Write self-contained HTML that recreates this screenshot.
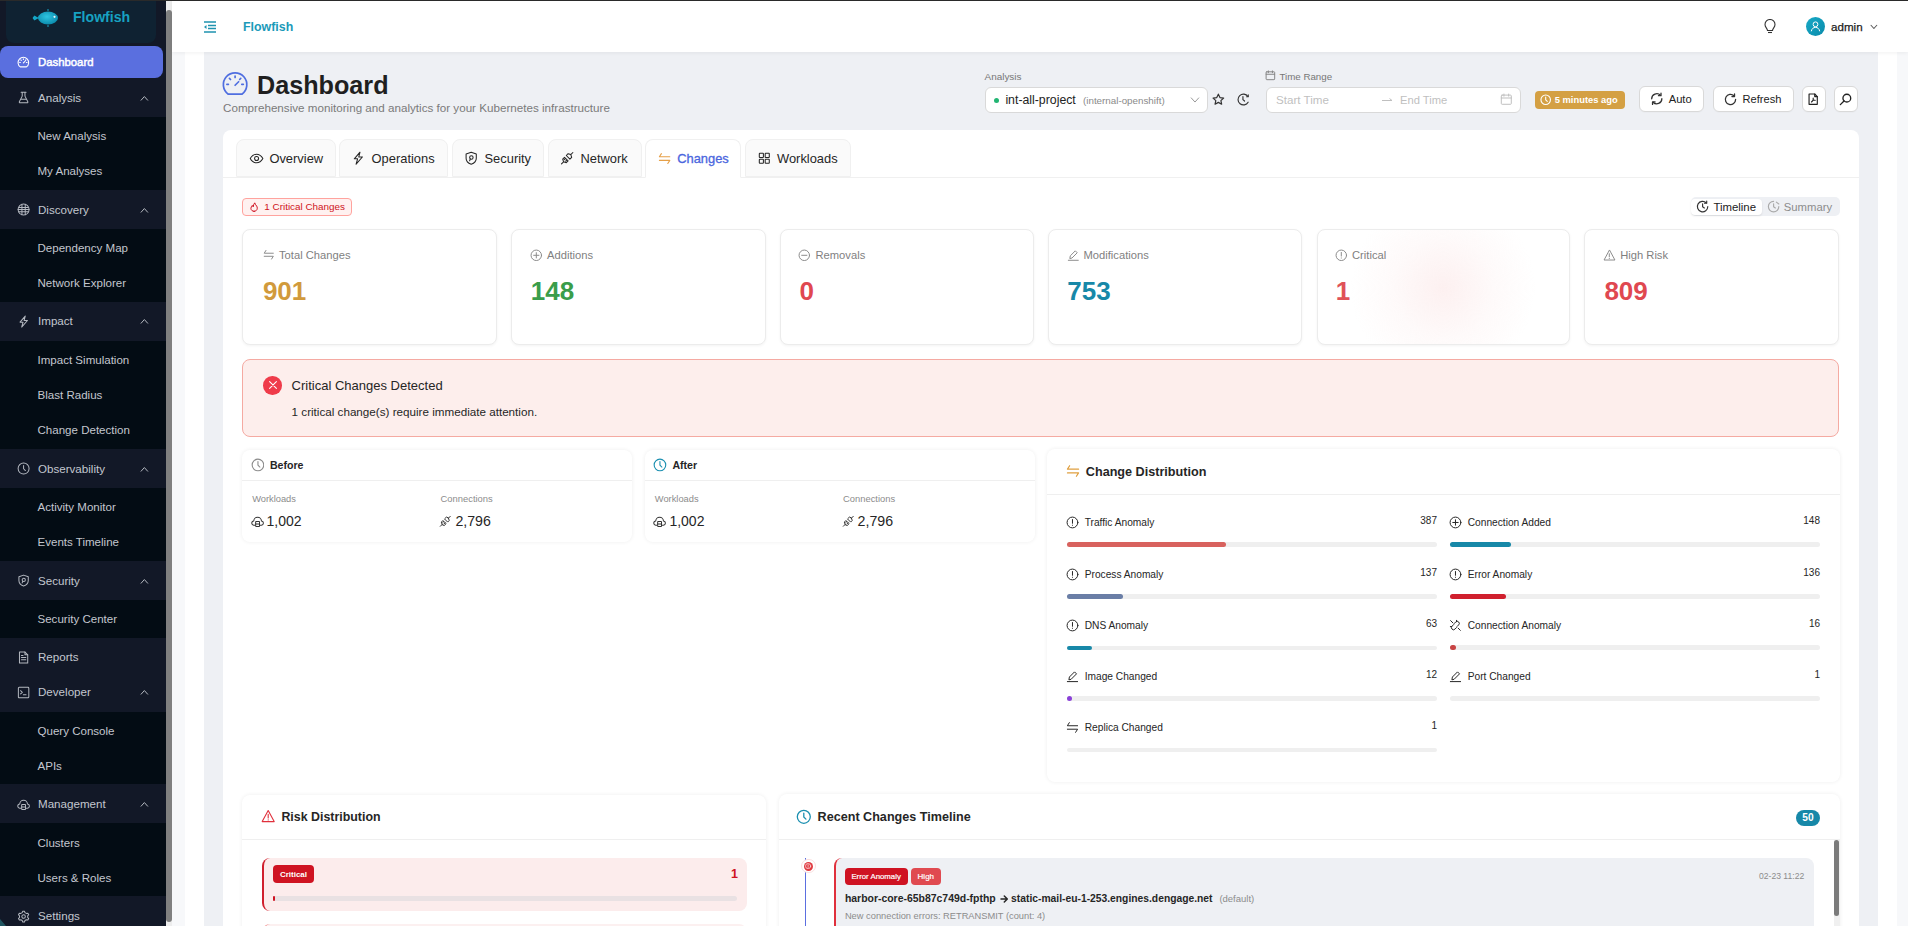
<!DOCTYPE html><html><head><meta charset="utf-8"><style>
*{margin:0;padding:0;box-sizing:border-box}
html,body{width:1908px;height:926px;overflow:hidden;background:#f7f8fa;font-family:"Liberation Sans",sans-serif}
.a{position:absolute}
.t{white-space:nowrap}
</style></head><body><div class="a" style="left:0;top:0;width:1908px;height:926px;overflow:hidden">
<div class="a" style="left:172px;top:0px;width:1736.00px;height:926.00px;background:#f7f8fa"></div>
<div class="a" style="left:185px;top:0px;width:1712.00px;height:926.00px;background:#ffffff"></div>
<div class="a" style="left:204px;top:52px;width:1674.00px;height:874.00px;background:#eef0f4"></div>
<div class="a" style="left:0px;top:0px;width:166.00px;height:926.00px;background:#121827"></div>
<div class="a" style="left:0px;top:117px;width:166.00px;height:73.00px;background:#030c14"></div>
<div class="a" style="left:0px;top:229px;width:166.00px;height:73.00px;background:#030c14"></div>
<div class="a" style="left:0px;top:341px;width:166.00px;height:108.00px;background:#030c14"></div>
<div class="a" style="left:0px;top:488px;width:166.00px;height:73.00px;background:#030c14"></div>
<div class="a" style="left:0px;top:600px;width:166.00px;height:38.00px;background:#030c14"></div>
<div class="a" style="left:0px;top:712px;width:166.00px;height:72.00px;background:#030c14"></div>
<div class="a" style="left:0px;top:823px;width:166.00px;height:73.00px;background:#030c14"></div>
<svg class="a" style="left:0;top:918px" width="8" height="8" viewBox="0 0 8 8"><path d="M0 1 L6 8 H0Z" fill="#1f5560"/></svg>
<div class="a" style="left:166px;top:0px;width:6.00px;height:926.00px;background:#ededed"></div>
<div class="a" style="left:166px;top:10px;width:6.00px;height:912.00px;background:#808080;border-radius:3px"></div>
<div class="a" style="left:6px;top:0px;width:150.00px;height:43.00px;background:#0f2232;border-radius:0 0 8px 8px"></div>
<svg class="a" style="left:31px;top:8px" width="30" height="20" viewBox="0 0 30 20"><defs><radialGradient id="fg" cx="45%" cy="40%" r="60%"><stop offset="0" stop-color="#2ec4e0"/><stop offset="1" stop-color="#0c8cad"/></radialGradient></defs><ellipse cx="17" cy="10" rx="10" ry="6.5" fill="url(#fg)"/><path d="M8 10 L3 7.5 L3 12.5 Z" fill="#14a6c6"/><circle cx="3.5" cy="10" r="1.8" fill="#14a6c6"/><path d="M17 3 v-2M17 17v2" stroke="#14a6c6" stroke-width="1"/><circle cx="23.5" cy="8.8" r="1.1" fill="#e8f6fa"/></svg>
<div class="a t" style="left:73px;top:7.00px;font-size:14.1px;line-height:20px;color:#17a2c2;font-weight:700;">Flowfish</div>
<div class="a" style="left:0px;top:46px;width:163.00px;height:32.00px;background:#5a6fdf;border-radius:8px"></div>
<svg class="a" style="left:17.04px;top:56.04px;" width="12.72" height="12.72" viewBox="0 0 24 24" fill="none" stroke="#ffffff" stroke-width="2.08" stroke-linecap="round" stroke-linejoin="round"><path d="M6.2 20.6 A10 10 0 1 1 17.8 20.6 Z"/><path d="M12 5.2v1.2M7.2 7.2l.9.9M16.8 7.2l-.9.9M5 12.2h1.3M17.7 12.2h1.3M12 13l3-3"/></svg>
<div class="a t" style="left:38px;top:54.00px;font-size:11.35px;line-height:16px;color:#ffffff;font-weight:400;-webkit-text-stroke:0.45px #fff">Dashboard</div>
<svg class="a" style="left:16.90px;top:90.90px;" width="13.20" height="13.20" viewBox="0 0 24 24" fill="none" stroke="#b4b8c0" stroke-width="1.82" stroke-linecap="round" stroke-linejoin="round"><path d="M7.5 2.5h9M9.5 2.5v6.8L4.3 19.6a1.3 1.3 0 0 0 1.1 1.9h13.2a1.3 1.3 0 0 0 1.1-1.9L14.5 9.3V2.5M6.8 15h10.4"/></svg>
<div class="a t" style="left:38px;top:90.00px;font-size:11.6px;line-height:16px;color:#c3c7cf;font-weight:400;">Analysis</div>
<svg class="a" style="left:140.32px;top:94.12px;" width="8.76" height="8.76" viewBox="0 0 24 24" fill="none" stroke="#b4b8c0" stroke-width="2.74" stroke-linecap="round" stroke-linejoin="round"><path d="M3 17 12 7l9 10"/></svg>
<svg class="a" style="left:16.90px;top:202.90px;" width="13.20" height="13.20" viewBox="0 0 24 24" fill="none" stroke="#b4b8c0" stroke-width="1.82" stroke-linecap="round" stroke-linejoin="round"><circle cx="12" cy="12" r="10"/><path d="M2 12h20M9 2.5v19M15 2.5v19M3.5 8h17M3.5 16h17"/></svg>
<div class="a t" style="left:38px;top:202.00px;font-size:11.6px;line-height:16px;color:#c3c7cf;font-weight:400;">Discovery</div>
<svg class="a" style="left:140.32px;top:206.12px;" width="8.76" height="8.76" viewBox="0 0 24 24" fill="none" stroke="#b4b8c0" stroke-width="2.74" stroke-linecap="round" stroke-linejoin="round"><path d="M3 17 12 7l9 10"/></svg>
<svg class="a" style="left:16.90px;top:314.90px;" width="13.20" height="13.20" viewBox="0 0 24 24" fill="none" stroke="#b4b8c0" stroke-width="1.82" stroke-linecap="round" stroke-linejoin="round"><path d="M15 2 5.5 13h5.5L8.5 22 19 10h-6z"/></svg>
<div class="a t" style="left:38px;top:313.00px;font-size:11.6px;line-height:16px;color:#c3c7cf;font-weight:400;">Impact</div>
<svg class="a" style="left:140.32px;top:317.12px;" width="8.76" height="8.76" viewBox="0 0 24 24" fill="none" stroke="#b4b8c0" stroke-width="2.74" stroke-linecap="round" stroke-linejoin="round"><path d="M3 17 12 7l9 10"/></svg>
<svg class="a" style="left:16.90px;top:461.90px;" width="13.20" height="13.20" viewBox="0 0 24 24" fill="none" stroke="#b4b8c0" stroke-width="1.82" stroke-linecap="round" stroke-linejoin="round"><circle cx="12" cy="12" r="10"/><path d="M12 6.2V12.3l3.3 3.3"/></svg>
<div class="a t" style="left:38px;top:461.00px;font-size:11.6px;line-height:16px;color:#c3c7cf;font-weight:400;">Observability</div>
<svg class="a" style="left:140.32px;top:465.12px;" width="8.76" height="8.76" viewBox="0 0 24 24" fill="none" stroke="#b4b8c0" stroke-width="2.74" stroke-linecap="round" stroke-linejoin="round"><path d="M3 17 12 7l9 10"/></svg>
<svg class="a" style="left:16.90px;top:573.90px;" width="13.20" height="13.20" viewBox="0 0 24 24" fill="none" stroke="#b4b8c0" stroke-width="1.82" stroke-linecap="round" stroke-linejoin="round"><path d="M12 2 3.5 5v7c0 5 3.6 8.4 8.5 10 4.9-1.6 8.5-5 8.5-10V5z"/><circle cx="12.3" cy="10.8" r="2.9"/><path d="M10.6 13.2 9.4 16.2"/></svg>
<div class="a t" style="left:38px;top:573.00px;font-size:11.6px;line-height:16px;color:#c3c7cf;font-weight:400;">Security</div>
<svg class="a" style="left:140.32px;top:577.12px;" width="8.76" height="8.76" viewBox="0 0 24 24" fill="none" stroke="#b4b8c0" stroke-width="2.74" stroke-linecap="round" stroke-linejoin="round"><path d="M3 17 12 7l9 10"/></svg>
<svg class="a" style="left:16.90px;top:650.80px;" width="13.20" height="13.20" viewBox="0 0 24 24" fill="none" stroke="#b4b8c0" stroke-width="1.82" stroke-linecap="round" stroke-linejoin="round"><path d="M4.5 2h10L19.5 7v15h-15z"/><path d="M14.5 2v5h5M8 12h8M8 16h8M8 8h3"/></svg>
<div class="a t" style="left:38px;top:649.00px;font-size:11.6px;line-height:16px;color:#c3c7cf;font-weight:400;">Reports</div>
<svg class="a" style="left:16.90px;top:685.70px;" width="13.20" height="13.20" viewBox="0 0 24 24" fill="none" stroke="#b4b8c0" stroke-width="1.82" stroke-linecap="round" stroke-linejoin="round"><rect x="2.5" y="2.5" width="19" height="19" rx="1.5"/><path d="M6.5 8.5l3.2 3-3.2 3M11.5 16h5"/></svg>
<div class="a t" style="left:38px;top:684.00px;font-size:11.6px;line-height:16px;color:#c3c7cf;font-weight:400;">Developer</div>
<svg class="a" style="left:140.32px;top:688.12px;" width="8.76" height="8.76" viewBox="0 0 24 24" fill="none" stroke="#b4b8c0" stroke-width="2.74" stroke-linecap="round" stroke-linejoin="round"><path d="M3 17 12 7l9 10"/></svg>
<svg class="a" style="left:16.90px;top:797.90px;" width="13.20" height="13.20" viewBox="0 0 24 24" fill="none" stroke="#b4b8c0" stroke-width="1.82" stroke-linecap="round" stroke-linejoin="round"><path d="M7 18.5H5.5a3.8 3.8 0 0 1-.5-7.6 7 7 0 0 1 14 0 3.8 3.8 0 0 1-.5 7.6H17"/><rect x="8.5" y="12" width="7" height="9" rx=".8"/><path d="M8.5 16.5h7"/></svg>
<div class="a t" style="left:38px;top:796.00px;font-size:11.6px;line-height:16px;color:#c3c7cf;font-weight:400;">Management</div>
<svg class="a" style="left:140.32px;top:800.12px;" width="8.76" height="8.76" viewBox="0 0 24 24" fill="none" stroke="#b4b8c0" stroke-width="2.74" stroke-linecap="round" stroke-linejoin="round"><path d="M3 17 12 7l9 10"/></svg>
<svg class="a" style="left:16.90px;top:909.90px;" width="13.20" height="13.20" viewBox="0 0 24 24" fill="none" stroke="#b4b8c0" stroke-width="1.82" stroke-linecap="round" stroke-linejoin="round"><circle cx="12" cy="12" r="3.2"/><path d="M9.53 4.81 L10.44 2.12 L13.56 2.12 L14.47 4.81 L16.99 6.26 L19.77 5.71 L21.34 8.42 L19.46 10.55 L19.46 13.45 L21.34 15.58 L19.77 18.29 L16.99 17.74 L14.47 19.19 L13.56 21.88 L10.44 21.88 L9.53 19.19 L7.01 17.74 L4.23 18.29 L2.66 15.58 L4.54 13.45 L4.54 10.55 L2.66 8.42 L4.23 5.71 L7.01 6.26Z"/></svg>
<div class="a t" style="left:38px;top:908.00px;font-size:11.6px;line-height:16px;color:#c3c7cf;font-weight:400;">Settings</div>
<div class="a t" style="left:37.5px;top:128.00px;font-size:11.55px;line-height:16px;color:#c3c7cf;font-weight:400;">New Analysis</div>
<div class="a t" style="left:37.5px;top:163.00px;font-size:11.55px;line-height:16px;color:#c3c7cf;font-weight:400;">My Analyses</div>
<div class="a t" style="left:37.5px;top:240.00px;font-size:11.55px;line-height:16px;color:#c3c7cf;font-weight:400;">Dependency Map</div>
<div class="a t" style="left:37.5px;top:275.00px;font-size:11.55px;line-height:16px;color:#c3c7cf;font-weight:400;">Network Explorer</div>
<div class="a t" style="left:37.5px;top:352.00px;font-size:11.55px;line-height:16px;color:#c3c7cf;font-weight:400;">Impact Simulation</div>
<div class="a t" style="left:37.5px;top:387.00px;font-size:11.55px;line-height:16px;color:#c3c7cf;font-weight:400;">Blast Radius</div>
<div class="a t" style="left:37.5px;top:422.00px;font-size:11.55px;line-height:16px;color:#c3c7cf;font-weight:400;">Change Detection</div>
<div class="a t" style="left:37.5px;top:499.00px;font-size:11.55px;line-height:16px;color:#c3c7cf;font-weight:400;">Activity Monitor</div>
<div class="a t" style="left:37.5px;top:534.00px;font-size:11.55px;line-height:16px;color:#c3c7cf;font-weight:400;">Events Timeline</div>
<div class="a t" style="left:37.5px;top:611.00px;font-size:11.55px;line-height:16px;color:#c3c7cf;font-weight:400;">Security Center</div>
<div class="a t" style="left:37.5px;top:723.00px;font-size:11.55px;line-height:16px;color:#c3c7cf;font-weight:400;">Query Console</div>
<div class="a t" style="left:37.5px;top:758.00px;font-size:11.55px;line-height:16px;color:#c3c7cf;font-weight:400;">APIs</div>
<div class="a t" style="left:37.5px;top:835.00px;font-size:11.55px;line-height:16px;color:#c3c7cf;font-weight:400;">Clusters</div>
<div class="a t" style="left:37.5px;top:870.00px;font-size:11.55px;line-height:16px;color:#c3c7cf;font-weight:400;">Users &amp; Roles</div>
<div class="a" style="left:172px;top:0px;width:1736.00px;height:52.00px;background:#ffffff;box-shadow:0 1px 4px rgba(0,0,0,0.06)"></div>
<div class="a" style="left:0px;top:0px;width:1908.00px;height:1.00px;background:#2a2a2a"></div>
<svg class="a" style="left:203px;top:21px" width="14" height="12" viewBox="0 0 14 12" fill="none" stroke="#1f93b0" stroke-width="1.3"><path d="M1 1h12M5 4.5h8M5 7.5h8M1 11h12"/><path d="M1 6 L3.5 4 V8 Z" fill="#1f93b0" stroke="none"/></svg>
<div class="a t" style="left:243px;top:18.70px;font-size:12.4px;line-height:17px;color:#1b9ab9;font-weight:700;">Flowfish</div>
<svg class="a" style="left:1763px;top:19px" width="14" height="16" viewBox="0 0 14 16" fill="none" stroke="#333" stroke-width="1.1"><path d="M4.5 11.5 C4.5 9.5 2 8.5 2 5.5 A5 5 0 0 1 12 5.5 C12 8.5 9.5 9.5 9.5 11.5 Z"/><path d="M5 13.5h4"/></svg>
<div class="a" style="left:1806px;top:17px;width:19px;height:19px;border-radius:50%;background:linear-gradient(135deg,#17a9c6,#0b8bab)"></div>
<svg class="a" style="left:1809px;top:20px" width="13" height="13" viewBox="0 0 13 13" fill="none" stroke="#fff" stroke-width="1"><circle cx="6.5" cy="4.3" r="2.4"/><path d="M2.3 11.3 C2.8 8.6 4.4 7.4 6.5 7.4 S10.2 8.6 10.7 11.3"/></svg>
<div class="a t" style="left:1831px;top:18.50px;font-size:11.6px;line-height:16px;color:#222;font-weight:400;-webkit-text-stroke:0.25px #222">admin</div>
<svg class="a" style="left:1870.10px;top:22.90px;" width="7.80" height="7.80" viewBox="0 0 24 24" fill="none" stroke="#555" stroke-width="3.08" stroke-linecap="round" stroke-linejoin="round"><path d="M3 7l9 10 9-10"/></svg>
<svg class="a" style="left:220.90px;top:69.90px;" width="28.20" height="28.20" viewBox="0 0 24 24" fill="none" stroke="#4f6ee0" stroke-width="1.45" stroke-linecap="round" stroke-linejoin="round"><path d="M6.2 20.6 A10 10 0 1 1 17.8 20.6 Z"/><path d="M12 5.2v1.2M7.2 7.2l.9.9M16.8 7.2l-.9.9M5 12.2h1.3M17.7 12.2h1.3M12 13l3-3"/></svg>
<div class="a t" style="left:257px;top:67.80px;font-size:25.2px;line-height:35px;color:#1f1f1f;font-weight:700;">Dashboard</div>
<div class="a t" style="left:223px;top:100.00px;font-size:11.65px;line-height:16px;color:#7a7a7a;font-weight:400;">Comprehensive monitoring and analytics for your Kubernetes infrastructure</div>
<div class="a t" style="left:984.5px;top:69.50px;font-size:9.95px;line-height:14px;color:#777;font-weight:400;">Analysis</div>
<div class="a" style="left:985px;top:87.3px;width:223.30px;height:25.70px;background:#fff;border:1px solid #d9d9d9;border-radius:6px"></div>
<div class="a" style="left:994px;top:98px;width:5px;height:5px;border-radius:50%;background:#22b573"></div>
<div class="a t" style="left:1005.4px;top:91.80px;font-size:12.3px;line-height:17px;color:#222;font-weight:400;">int-all-project</div>
<div class="a t" style="left:1083px;top:93.80px;font-size:9.8px;line-height:14px;color:#8a8a8a;font-weight:400;">(internal-openshift)</div>
<svg class="a" style="left:1189.72px;top:94.82px;" width="9.96" height="9.96" viewBox="0 0 24 24" fill="none" stroke="#999" stroke-width="2.41" stroke-linecap="round" stroke-linejoin="round"><path d="M3 7l9 10 9-10"/></svg>
<svg class="a" style="left:1212.24px;top:92.64px;" width="12.72" height="12.72" viewBox="0 0 24 24" fill="none" stroke="#333" stroke-width="2.26" stroke-linecap="round" stroke-linejoin="round"><path d="M12 2.2l3 6.5 7 .8-5.2 4.8 1.4 6.9L12 17.7l-6.2 3.5 1.4-6.9L2 9.5l7-.8z"/></svg>
<svg class="a" style="left:1237.22px;top:92.92px;" width="12.96" height="12.96" viewBox="0 0 24 24" fill="none" stroke="#333" stroke-width="2.13" stroke-linecap="round" stroke-linejoin="round"><path d="M20.2 6.5A10 10 0 1 0 20.6 17"/><path d="M20.8 3.5v3.5h-3"/><path d="M11 6.5v5.8l3 2.6"/></svg>
<svg class="a" style="left:1265.10px;top:70.40px;" width="10.80" height="10.80" viewBox="0 0 24 24" fill="none" stroke="#888" stroke-width="2.22" stroke-linecap="round" stroke-linejoin="round"><rect x="2.5" y="4" width="19" height="17.5" rx="1.5"/><path d="M2.5 9.5h19M7.5 2v4M16.5 2v4"/></svg>
<div class="a t" style="left:1279.4px;top:69.50px;font-size:9.75px;line-height:14px;color:#777;font-weight:400;">Time Range</div>
<div class="a" style="left:1265.8px;top:87.3px;width:255.70px;height:25.70px;background:#fff;border:1px solid #d9d9d9;border-radius:6px"></div>
<div class="a t" style="left:1276px;top:92.00px;font-size:11.6px;line-height:16px;color:#bfbfbf;font-weight:400;">Start Time</div>
<svg class="a" style="left:1381px;top:97px" width="12" height="6" viewBox="0 0 12 6" fill="none" stroke="#bfbfbf" stroke-width="1"><path d="M1 3.5h10M8.5 1.5 11 3.5"/></svg>
<div class="a t" style="left:1400px;top:92.00px;font-size:11.2px;line-height:16px;color:#bfbfbf;font-weight:400;">End Time</div>
<svg class="a" style="left:1500.20px;top:93.20px;" width="12.60" height="12.60" viewBox="0 0 24 24" fill="none" stroke="#bfbfbf" stroke-width="1.90" stroke-linecap="round" stroke-linejoin="round"><rect x="2.5" y="4" width="19" height="17.5" rx="1.5"/><path d="M2.5 9.5h19M7.5 2v4M16.5 2v4"/></svg>
<div class="a" style="left:1535px;top:91px;width:89.70px;height:17.60px;background:#d4a043;border-radius:4px"></div>
<svg class="a" style="left:1539.90px;top:93.70px;" width="11.40" height="11.40" viewBox="0 0 24 24" fill="none" stroke="#fff" stroke-width="2.32" stroke-linecap="round" stroke-linejoin="round"><circle cx="12" cy="12" r="10"/><path d="M12 6.2V12.3l3.3 3.3"/></svg>
<div class="a t" style="left:1554.7px;top:93.30px;font-size:9.4px;line-height:13px;color:#fff;font-weight:700;">5 minutes ago</div>
<div class="a" style="left:1638.5px;top:86.4px;width:65.90px;height:25.20px;background:#fff;border:1px solid #d9d9d9;border-radius:6px;box-shadow:0 1px 1px rgba(0,0,0,0.02)"></div>
<div class="a" style="left:1712.5px;top:86.4px;width:81.70px;height:25.20px;background:#fff;border:1px solid #d9d9d9;border-radius:6px;box-shadow:0 1px 1px rgba(0,0,0,0.02)"></div>
<div class="a" style="left:1801.8px;top:86.4px;width:24.60px;height:25.20px;background:#fff;border:1px solid #d9d9d9;border-radius:6px;box-shadow:0 1px 1px rgba(0,0,0,0.02)"></div>
<div class="a" style="left:1833.5px;top:86.4px;width:24.90px;height:25.20px;background:#fff;border:1px solid #d9d9d9;border-radius:6px;box-shadow:0 1px 1px rgba(0,0,0,0.02)"></div>
<svg class="a" style="left:1649.72px;top:92.42px;" width="13.56" height="13.56" viewBox="0 0 24 24" fill="none" stroke="#333" stroke-width="2.30" stroke-linecap="round" stroke-linejoin="round"><path d="M21 12a9 9 0 0 1-15.5 6.2M3 12A9 9 0 0 1 18.5 5.8"/><path d="M19.5 2v4.5H15M4.5 22v-4.5H9"/></svg>
<div class="a t" style="left:1668.7px;top:91.30px;font-size:11.2px;line-height:16px;color:#222;font-weight:400;">Auto</div>
<svg class="a" style="left:1723.92px;top:92.72px;" width="12.96" height="12.96" viewBox="0 0 24 24" fill="none" stroke="#333" stroke-width="2.41" stroke-linecap="round" stroke-linejoin="round"><path d="M21.5 12A9.5 9.5 0 1 1 18.5 5"/><path d="M19.5 1.8v4.7h-4.7"/></svg>
<div class="a t" style="left:1742.6px;top:91.30px;font-size:11.1px;line-height:16px;color:#222;font-weight:400;">Refresh</div>
<svg class="a" style="left:1807.42px;top:93.42px;" width="12.36" height="12.36" viewBox="0 0 24 24" fill="none" stroke="#222" stroke-width="2.23" stroke-linecap="round" stroke-linejoin="round"><path d="M4 2h11l5 5v15H4z"/><path d="M15 2v5h5"/><path d="M12 10v4M8.8 17.5l3.2-3.5M12 14h4"/></svg>
<svg class="a" style="left:1839.12px;top:93.32px;" width="12.96" height="12.96" viewBox="0 0 24 24" fill="none" stroke="#222" stroke-width="2.50" stroke-linecap="round" stroke-linejoin="round"><circle cx="14.5" cy="9.5" r="7.2"/><path d="M9.3 14.7 2.5 21.5"/></svg>
<div class="a" style="left:223px;top:130px;width:1636.00px;height:796.00px;background:#fff;border-radius:8px 8px 0 0"></div>
<div class="a" style="left:223px;top:177px;width:1636.00px;height:1.00px;background:#f0f0f0"></div>
<div class="a" style="left:236.4px;top:139.3px;width:100.1px;height:38.2px;background:#fafafa;border:1px solid #f0f0f0;border-bottom:1px solid #f0f0f0;border-radius:8px 8px 0 0"></div>
<div class="a t" style="left:269.4px;top:150.20px;font-size:12.9px;line-height:18px;color:#262626;font-weight:400;">Overview</div>
<svg class="a" style="left:248.84px;top:150.84px;" width="15.12" height="15.12" viewBox="0 0 24 24" fill="none" stroke="#262626" stroke-width="1.67" stroke-linecap="round" stroke-linejoin="round"><path d="M2 12s3.8-6.8 10-6.8S22 12 22 12s-3.8 6.8-10 6.8S2 12 2 12z"/><circle cx="12" cy="12" r="3.2"/></svg>
<div class="a" style="left:338.6px;top:139.3px;width:109.7px;height:38.2px;background:#fafafa;border:1px solid #f0f0f0;border-bottom:1px solid #f0f0f0;border-radius:8px 8px 0 0"></div>
<div class="a t" style="left:371.6px;top:150.20px;font-size:12.9px;line-height:18px;color:#262626;font-weight:400;">Operations</div>
<svg class="a" style="left:350.80px;top:151.20px;" width="14.40" height="14.40" viewBox="0 0 24 24" fill="none" stroke="#262626" stroke-width="1.75" stroke-linecap="round" stroke-linejoin="round"><path d="M15 2 5.5 13h5.5L8.5 22 19 10h-6z"/></svg>
<div class="a" style="left:451.7px;top:139.3px;width:92.7px;height:38.2px;background:#fafafa;border:1px solid #f0f0f0;border-bottom:1px solid #f0f0f0;border-radius:8px 8px 0 0"></div>
<div class="a t" style="left:484.5px;top:150.20px;font-size:12.9px;line-height:18px;color:#262626;font-weight:400;">Security</div>
<svg class="a" style="left:464.00px;top:151.20px;" width="14.40" height="14.40" viewBox="0 0 24 24" fill="none" stroke="#262626" stroke-width="1.75" stroke-linecap="round" stroke-linejoin="round"><path d="M12 2 3.5 5v7c0 5 3.6 8.4 8.5 10 4.9-1.6 8.5-5 8.5-10V5z"/><circle cx="12.3" cy="10.8" r="2.9"/><path d="M10.6 13.2 9.4 16.2"/></svg>
<div class="a" style="left:547.8px;top:139.3px;width:94.7px;height:38.2px;background:#fafafa;border:1px solid #f0f0f0;border-bottom:1px solid #f0f0f0;border-radius:8px 8px 0 0"></div>
<div class="a t" style="left:580.5px;top:150.20px;font-size:12.9px;line-height:18px;color:#262626;font-weight:400;">Network</div>
<svg class="a" style="left:560.10px;top:151.20px;" width="14.40" height="14.40" viewBox="0 0 24 24" fill="none" stroke="#262626" stroke-width="1.75" stroke-linecap="round" stroke-linejoin="round"><path d="M2.5 21.5 6 18M21.5 2.5 18 6M6 18l-1.5-4.5 3-3 6 6-3 3zM18 6l1.5 4.5-3 3-6-6 3-3zM9 12.5l-2 2M11.5 15l-2 2"/></svg>
<div class="a" style="left:644.5px;top:139.3px;width:96.8px;height:39.2px;background:#fff;border:1px solid #f0f0f0;border-bottom:1px solid #fff;border-radius:8px 8px 0 0"></div>
<div class="a t" style="left:677.2px;top:150.20px;font-size:12.9px;line-height:18px;color:#4a66de;font-weight:400;-webkit-text-stroke:0.3px #4a66de">Changes</div>
<svg class="a" style="left:658.00px;top:151.80px;" width="13.20" height="13.20" viewBox="0 0 24 24" fill="none" stroke="#e6a048" stroke-width="1.91" stroke-linecap="round" stroke-linejoin="round"><path d="M6.2 3 2.5 8.8h19M17.8 21l3.7-5.8h-19"/></svg>
<div class="a" style="left:744.7px;top:139.3px;width:106.6px;height:38.2px;background:#fafafa;border:1px solid #f0f0f0;border-bottom:1px solid #f0f0f0;border-radius:8px 8px 0 0"></div>
<div class="a t" style="left:777px;top:150.20px;font-size:12.9px;line-height:18px;color:#262626;font-weight:400;">Workloads</div>
<svg class="a" style="left:758.20px;top:152.10px;" width="12.60" height="12.60" viewBox="0 0 24 24" fill="none" stroke="#262626" stroke-width="2.00" stroke-linecap="round" stroke-linejoin="round"><rect x="2.5" y="2.5" width="7.8" height="7.8" rx="1"/><rect x="13.7" y="2.5" width="7.8" height="7.8" rx="1"/><rect x="2.5" y="13.7" width="7.8" height="7.8" rx="1"/><rect x="13.7" y="13.7" width="7.8" height="7.8" rx="1"/></svg>
<div class="a" style="left:242px;top:198.3px;width:110.00px;height:17.30px;background:#fff1f0;border:1px solid #ffa39e;border-radius:4px"></div>
<svg class="a" style="left:248.70px;top:201.90px;" width="10.20" height="10.20" viewBox="0 0 24 24" fill="none" stroke="#cf1322" stroke-width="2.35" stroke-linecap="round" stroke-linejoin="round"><path d="M12 22c-4.2 0-7.5-3-7.5-7 0-3 1.8-5.2 3.3-7 .3 1.6 1 2.8 2.2 3.6C10.2 7.5 11.5 4.5 13.5 2c.8 3.5 3 5.5 4.6 7.6 1 1.4 1.4 3 1.4 5.2 0 4-3.3 7.2-7.5 7.2z"/></svg>
<div class="a t" style="left:264.3px;top:200.00px;font-size:9.9px;line-height:14px;color:#cf1322;font-weight:400;">1 Critical Changes</div>
<div class="a" style="left:1690.5px;top:197.1px;width:149.50px;height:18.70px;background:#eef0f4;border-radius:5px"></div>
<div class="a" style="left:1691.1px;top:198.9px;width:70.70px;height:16.30px;background:#fff;border-radius:4px;box-shadow:0 1px 2px rgba(0,0,0,0.1)"></div>
<svg class="a" style="left:1695.90px;top:200.40px;" width="13.20" height="13.20" viewBox="0 0 24 24" fill="none" stroke="#333" stroke-width="2.09" stroke-linecap="round" stroke-linejoin="round"><path d="M21.5 12A9.5 9.5 0 1 1 18.8 5.3"/><path d="M19.5 1.8v4h-4"/><path d="M12 6.8v5.4l3.2 2.4"/></svg>
<div class="a t" style="left:1713.4px;top:199.00px;font-size:11.4px;line-height:16px;color:#222;font-weight:400;">Timeline</div>
<svg class="a" style="left:1766.70px;top:200.40px;" width="13.20" height="13.20" viewBox="0 0 24 24" fill="none" stroke="#aaa" stroke-width="2.09" stroke-linecap="round" stroke-linejoin="round"><path d="M21.5 12A9.5 9.5 0 1 1 12 2.5"/><path d="M12 6.8v5.4l3.2 2.4M17 3.8l4.5 3.5"/></svg>
<div class="a t" style="left:1783.8px;top:199.00px;font-size:11.3px;line-height:16px;color:#8c8c8c;font-weight:400;">Summary</div>
<div class="a" style="left:242.3px;top:229.4px;width:254.80px;height:115.90px;background:#fff;border:1px solid #ececec;border-radius:8px;box-shadow:0 1px 3px rgba(0,0,0,0.05)"></div>
<svg class="a" style="left:262.84px;top:249.14px;" width="11.52" height="11.52" viewBox="0 0 24 24" fill="none" stroke="#8c8c8c" stroke-width="2.08" stroke-linecap="round" stroke-linejoin="round"><path d="M6.2 3 2.5 8.8h19M17.8 21l3.7-5.8h-19"/></svg>
<div class="a t" style="left:279px;top:247.20px;font-size:11.2px;line-height:16px;color:#7f7f7f;font-weight:400;">Total Changes</div>
<div class="a t" style="left:262.9px;top:272.90px;font-size:26.0px;line-height:36px;color:#d19a3c;font-weight:700;">901</div>
<div class="a" style="left:511.2px;top:229.4px;width:254.50px;height:115.90px;background:#fff;border:1px solid #ececec;border-radius:8px;box-shadow:0 1px 3px rgba(0,0,0,0.05)"></div>
<svg class="a" style="left:530.10px;top:248.60px;" width="12.60" height="12.60" viewBox="0 0 24 24" fill="none" stroke="#8c8c8c" stroke-width="1.90" stroke-linecap="round" stroke-linejoin="round"><circle cx="12" cy="12" r="10"/><path d="M12 7v10M7 12h10"/></svg>
<div class="a t" style="left:547px;top:247.20px;font-size:11.2px;line-height:16px;color:#7f7f7f;font-weight:400;">Additions</div>
<div class="a t" style="left:530.8px;top:272.90px;font-size:26.0px;line-height:36px;color:#3a9d4a;font-weight:700;">148</div>
<div class="a" style="left:779.7px;top:229.4px;width:254.50px;height:115.90px;background:#fff;border:1px solid #ececec;border-radius:8px;box-shadow:0 1px 3px rgba(0,0,0,0.05)"></div>
<svg class="a" style="left:798.20px;top:248.60px;" width="12.60" height="12.60" viewBox="0 0 24 24" fill="none" stroke="#8c8c8c" stroke-width="1.90" stroke-linecap="round" stroke-linejoin="round"><circle cx="12" cy="12" r="10"/><path d="M7 12h10"/></svg>
<div class="a t" style="left:815.5px;top:247.20px;font-size:11.2px;line-height:16px;color:#7f7f7f;font-weight:400;">Removals</div>
<div class="a t" style="left:799.4px;top:272.90px;font-size:26.0px;line-height:36px;color:#e04850;font-weight:700;">0</div>
<div class="a" style="left:1047.7px;top:229.4px;width:254.10px;height:115.90px;background:#fff;border:1px solid #ececec;border-radius:8px;box-shadow:0 1px 3px rgba(0,0,0,0.05)"></div>
<svg class="a" style="left:1067.10px;top:248.60px;" width="12.60" height="12.60" viewBox="0 0 24 24" fill="none" stroke="#8c8c8c" stroke-width="1.90" stroke-linecap="round" stroke-linejoin="round"><path d="M2.5 21.5h19M5.5 17.5l.8-4.5L15.8 3.5l3.7 3.7L10 16.7z"/></svg>
<div class="a t" style="left:1083.5px;top:247.20px;font-size:11.2px;line-height:16px;color:#7f7f7f;font-weight:400;">Modifications</div>
<div class="a t" style="left:1067.3px;top:272.90px;font-size:26.0px;line-height:36px;color:#1788a8;font-weight:700;">753</div>
<div class="a" style="left:1316.5px;top:229.4px;width:253.80px;height:115.90px;background:#fff;border:1px solid #ececec;border-radius:8px;box-shadow:0 1px 3px rgba(0,0,0,0.05);background:radial-gradient(circle 92px at 125px 58px, rgba(251,228,228,0.55), rgba(252,238,238,0.3) 55%, rgba(255,255,255,0) 100%), #fff"></div>
<svg class="a" style="left:1335.20px;top:248.60px;" width="12.60" height="12.60" viewBox="0 0 24 24" fill="none" stroke="#8c8c8c" stroke-width="1.90" stroke-linecap="round" stroke-linejoin="round"><circle cx="12" cy="12" r="10"/><path d="M12 6.5v7M12 17v.3"/></svg>
<div class="a t" style="left:1352px;top:247.20px;font-size:11.2px;line-height:16px;color:#7f7f7f;font-weight:400;">Critical</div>
<div class="a t" style="left:1335.8px;top:272.90px;font-size:26.0px;line-height:36px;color:#e05258;font-weight:700;">1</div>
<div class="a" style="left:1584.4px;top:229.4px;width:254.80px;height:115.90px;background:#fff;border:1px solid #ececec;border-radius:8px;box-shadow:0 1px 3px rgba(0,0,0,0.05)"></div>
<svg class="a" style="left:1603.40px;top:248.60px;" width="12.60" height="12.60" viewBox="0 0 24 24" fill="none" stroke="#8c8c8c" stroke-width="1.90" stroke-linecap="round" stroke-linejoin="round"><path d="M12 2.5 2 21h20z"/><path d="M12 9v6M12 18v.3"/></svg>
<div class="a t" style="left:1620.2px;top:247.20px;font-size:11.2px;line-height:16px;color:#7f7f7f;font-weight:400;">High Risk</div>
<div class="a t" style="left:1604.4px;top:272.90px;font-size:26.0px;line-height:36px;color:#e04850;font-weight:700;">809</div>
<div class="a" style="left:242.3px;top:359.4px;width:1597.20px;height:77.30px;background:#fdeeec;border:1px solid #f5aaa2;border-radius:8px"></div>
<div class="a" style="left:263.3px;top:376.2px;width:18.5px;height:18.5px;border-radius:50%;background:#ef3b4a"></div>
<svg class="a" style="left:267.5px;top:380.4px" width="10" height="10" viewBox="0 0 10 10" stroke="#fff" stroke-width="1.1" stroke-linecap="round"><path d="M1.6 1.6l6.8 6.8M8.4 1.6l-6.8 6.8"/></svg>
<div class="a t" style="left:291.6px;top:376.70px;font-size:13.0px;line-height:18px;color:#262626;font-weight:400;">Critical Changes Detected</div>
<div class="a t" style="left:291.6px;top:404.10px;font-size:11.66px;line-height:16px;color:#262626;font-weight:400;">1 critical change(s) require immediate attention.</div>
<div class="a" style="left:241.8px;top:450px;width:390.20px;height:92.00px;background:#fff;border-radius:8px;box-shadow:0 0 4px rgba(0,0,0,0.07)"></div>
<div class="a" style="left:241.8px;top:480px;width:390.20px;height:1.00px;background:#efefef"></div>
<svg class="a" style="left:250.54px;top:458.04px;" width="13.92" height="13.92" viewBox="0 0 24 24" fill="none" stroke="#8c8c8c" stroke-width="1.90" stroke-linecap="round" stroke-linejoin="round"><circle cx="12" cy="12" r="10"/><path d="M12 6.2V12.3l3.3 3.3"/></svg>
<div class="a t" style="left:269.9px;top:457.80px;font-size:10.6px;line-height:15px;color:#262626;font-weight:700;">Before</div>
<div class="a t" style="left:252.2px;top:492.50px;font-size:9.3px;line-height:13px;color:#8c8c8c;font-weight:400;">Workloads</div>
<div class="a t" style="left:440.6px;top:491.70px;font-size:9.4px;line-height:13px;color:#8c8c8c;font-weight:400;">Connections</div>
<svg class="a" style="left:251.10px;top:514.90px;" width="13.20" height="13.20" viewBox="0 0 24 24" fill="none" stroke="#333" stroke-width="1.82" stroke-linecap="round" stroke-linejoin="round"><path d="M7 18.5H5.5a3.8 3.8 0 0 1-.5-7.6 7 7 0 0 1 14 0 3.8 3.8 0 0 1-.5 7.6H17"/><rect x="8.5" y="12" width="7" height="9" rx=".8"/><path d="M8.5 16.5h7"/></svg>
<div class="a t" style="left:266.5px;top:511.20px;font-size:14.0px;line-height:20px;color:#262626;font-weight:400;">1,002</div>
<svg class="a" style="left:439.40px;top:515.20px;" width="12.60" height="12.60" viewBox="0 0 24 24" fill="none" stroke="#333" stroke-width="1.90" stroke-linecap="round" stroke-linejoin="round"><path d="M2.5 21.5 6 18M21.5 2.5 18 6M6 18l-1.5-4.5 3-3 6 6-3 3zM18 6l1.5 4.5-3 3-6-6 3-3zM9 12.5l-2 2M11.5 15l-2 2"/></svg>
<div class="a t" style="left:455.4px;top:511.20px;font-size:14.2px;line-height:20px;color:#262626;font-weight:400;">2,796</div>
<div class="a" style="left:645.1px;top:450px;width:390.10px;height:92.00px;background:#fff;border-radius:8px;box-shadow:0 0 4px rgba(0,0,0,0.07)"></div>
<div class="a" style="left:645.1px;top:480px;width:390.10px;height:1.00px;background:#efefef"></div>
<svg class="a" style="left:652.64px;top:458.04px;" width="13.92" height="13.92" viewBox="0 0 24 24" fill="none" stroke="#1a8fb0" stroke-width="1.90" stroke-linecap="round" stroke-linejoin="round"><circle cx="12" cy="12" r="10"/><path d="M12 6.2V12.3l3.3 3.3"/></svg>
<div class="a t" style="left:672.4px;top:457.80px;font-size:10.6px;line-height:15px;color:#262626;font-weight:700;">After</div>
<div class="a t" style="left:654.8px;top:492.50px;font-size:9.3px;line-height:13px;color:#8c8c8c;font-weight:400;">Workloads</div>
<div class="a t" style="left:843px;top:491.70px;font-size:9.4px;line-height:13px;color:#8c8c8c;font-weight:400;">Connections</div>
<svg class="a" style="left:652.90px;top:514.90px;" width="13.20" height="13.20" viewBox="0 0 24 24" fill="none" stroke="#333" stroke-width="1.82" stroke-linecap="round" stroke-linejoin="round"><path d="M7 18.5H5.5a3.8 3.8 0 0 1-.5-7.6 7 7 0 0 1 14 0 3.8 3.8 0 0 1-.5 7.6H17"/><rect x="8.5" y="12" width="7" height="9" rx=".8"/><path d="M8.5 16.5h7"/></svg>
<div class="a t" style="left:669.4px;top:511.20px;font-size:14.0px;line-height:20px;color:#262626;font-weight:400;">1,002</div>
<svg class="a" style="left:842.30px;top:515.20px;" width="12.60" height="12.60" viewBox="0 0 24 24" fill="none" stroke="#333" stroke-width="1.90" stroke-linecap="round" stroke-linejoin="round"><path d="M2.5 21.5 6 18M21.5 2.5 18 6M6 18l-1.5-4.5 3-3 6 6-3 3zM18 6l1.5 4.5-3 3-6-6 3-3zM9 12.5l-2 2M11.5 15l-2 2"/></svg>
<div class="a t" style="left:857.6px;top:511.20px;font-size:14.2px;line-height:20px;color:#262626;font-weight:400;">2,796</div>
<div class="a" style="left:1046.6px;top:449px;width:793.40px;height:333.00px;background:#fff;border-radius:8px;box-shadow:0 0 4px rgba(0,0,0,0.07)"></div>
<div class="a" style="left:1046.6px;top:493.5px;width:793.40px;height:1.00px;background:#efefef"></div>
<svg class="a" style="left:1066.28px;top:464.48px;" width="14.04" height="14.04" viewBox="0 0 24 24" fill="none" stroke="#e0a040" stroke-width="2.05" stroke-linecap="round" stroke-linejoin="round"><path d="M6.2 3 2.5 8.8h19M17.8 21l3.7-5.8h-19"/></svg>
<div class="a t" style="left:1085.8px;top:462.50px;font-size:12.64px;line-height:18px;color:#262626;font-weight:700;">Change Distribution</div>
<svg class="a" style="left:1066.02px;top:516.02px;" width="12.96" height="12.96" viewBox="0 0 24 24" fill="none" stroke="#262626" stroke-width="1.85" stroke-linecap="round" stroke-linejoin="round"><circle cx="12" cy="12" r="10"/><path d="M12 6.5v7M12 17v.3"/></svg>
<div class="a t" style="left:1084.7px;top:516.00px;font-size:10.2px;line-height:14px;color:#262626;font-weight:400;">Traffic Anomaly</div>
<div class="a t" style="right:471px;top:513.80px;font-size:10.0px;line-height:14px;color:#262626;font-weight:400;">387</div>
<div class="a" style="left:1067px;top:542.3px;width:370.00px;height:4.50px;background:#efefef;border-radius:3px"></div>
<div class="a" style="left:1067px;top:542.3px;width:159.00px;height:4.50px;background:#d8625e;border-radius:3px"></div>
<svg class="a" style="left:1066.02px;top:567.82px;" width="12.96" height="12.96" viewBox="0 0 24 24" fill="none" stroke="#262626" stroke-width="1.85" stroke-linecap="round" stroke-linejoin="round"><circle cx="12" cy="12" r="10"/><path d="M12 6.5v7M12 17v.3"/></svg>
<div class="a t" style="left:1084.7px;top:567.80px;font-size:10.2px;line-height:14px;color:#262626;font-weight:400;">Process Anomaly</div>
<div class="a t" style="right:471px;top:565.60px;font-size:10.0px;line-height:14px;color:#262626;font-weight:400;">137</div>
<div class="a" style="left:1067px;top:594.0999999999999px;width:370.00px;height:4.50px;background:#efefef;border-radius:3px"></div>
<div class="a" style="left:1067px;top:594.0999999999999px;width:56.00px;height:4.50px;background:#6a7ea6;border-radius:3px"></div>
<svg class="a" style="left:1066.02px;top:619.32px;" width="12.96" height="12.96" viewBox="0 0 24 24" fill="none" stroke="#262626" stroke-width="1.85" stroke-linecap="round" stroke-linejoin="round"><circle cx="12" cy="12" r="10"/><path d="M12 6.5v7M12 17v.3"/></svg>
<div class="a t" style="left:1084.7px;top:619.30px;font-size:10.2px;line-height:14px;color:#262626;font-weight:400;">DNS Anomaly</div>
<div class="a t" style="right:471px;top:617.10px;font-size:10.0px;line-height:14px;color:#262626;font-weight:400;">63</div>
<div class="a" style="left:1067px;top:645.5999999999999px;width:370.00px;height:4.50px;background:#efefef;border-radius:3px"></div>
<div class="a" style="left:1067px;top:645.5999999999999px;width:25.00px;height:4.50px;background:#1788a8;border-radius:3px"></div>
<svg class="a" style="left:1066.02px;top:670.12px;" width="12.96" height="12.96" viewBox="0 0 24 24" fill="none" stroke="#262626" stroke-width="1.85" stroke-linecap="round" stroke-linejoin="round"><path d="M2.5 21.5h19M5.5 17.5l.8-4.5L15.8 3.5l3.7 3.7L10 16.7z"/></svg>
<div class="a t" style="left:1084.7px;top:670.10px;font-size:10.2px;line-height:14px;color:#262626;font-weight:400;">Image Changed</div>
<div class="a t" style="right:471px;top:667.90px;font-size:10.0px;line-height:14px;color:#262626;font-weight:400;">12</div>
<div class="a" style="left:1067px;top:696.4px;width:370.00px;height:4.50px;background:#efefef;border-radius:3px"></div>
<div class="a" style="left:1067px;top:696.4px;width:5.00px;height:4.50px;background:#8a40d8;border-radius:3px"></div>
<svg class="a" style="left:1066.02px;top:721.22px;" width="12.96" height="12.96" viewBox="0 0 24 24" fill="none" stroke="#262626" stroke-width="1.85" stroke-linecap="round" stroke-linejoin="round"><path d="M6.2 3 2.5 8.8h19M17.8 21l3.7-5.8h-19"/></svg>
<div class="a t" style="left:1084.7px;top:721.20px;font-size:10.2px;line-height:14px;color:#262626;font-weight:400;">Replica Changed</div>
<div class="a t" style="right:471px;top:719.00px;font-size:10.0px;line-height:14px;color:#262626;font-weight:400;">1</div>
<div class="a" style="left:1067px;top:747.5px;width:370.00px;height:4.50px;background:#efefef;border-radius:3px"></div>
<svg class="a" style="left:1449.02px;top:516.02px;" width="12.96" height="12.96" viewBox="0 0 24 24" fill="none" stroke="#262626" stroke-width="1.85" stroke-linecap="round" stroke-linejoin="round"><circle cx="12" cy="12" r="10"/><path d="M12 7v10M7 12h10"/></svg>
<div class="a t" style="left:1467.7px;top:516.00px;font-size:10.2px;line-height:14px;color:#262626;font-weight:400;">Connection Added</div>
<div class="a t" style="right:88px;top:513.80px;font-size:10.0px;line-height:14px;color:#262626;font-weight:400;">148</div>
<div class="a" style="left:1450px;top:542.3px;width:370.00px;height:4.50px;background:#efefef;border-radius:3px"></div>
<div class="a" style="left:1450px;top:542.3px;width:60.80px;height:4.50px;background:#1788a8;border-radius:3px"></div>
<svg class="a" style="left:1449.02px;top:568.02px;" width="12.96" height="12.96" viewBox="0 0 24 24" fill="none" stroke="#262626" stroke-width="1.85" stroke-linecap="round" stroke-linejoin="round"><circle cx="12" cy="12" r="10"/><path d="M12 6.5v7M12 17v.3"/></svg>
<div class="a t" style="left:1467.7px;top:568.00px;font-size:10.2px;line-height:14px;color:#262626;font-weight:400;">Error Anomaly</div>
<div class="a t" style="right:88px;top:565.80px;font-size:10.0px;line-height:14px;color:#262626;font-weight:400;">136</div>
<div class="a" style="left:1450px;top:594.3px;width:370.00px;height:4.50px;background:#efefef;border-radius:3px"></div>
<div class="a" style="left:1450px;top:594.3px;width:55.80px;height:4.50px;background:#d0202e;border-radius:3px"></div>
<svg class="a" style="left:1449.02px;top:619.12px;" width="12.96" height="12.96" viewBox="0 0 24 24" fill="none" stroke="#262626" stroke-width="1.85" stroke-linecap="round" stroke-linejoin="round"><path d="M9.5 8.5 12.5 5.5a3.8 3.8 0 0 1 5.4 5.4L15 13.8M8.8 10.2 5.6 13.4a3.8 3.8 0 0 0 5.4 5.4l3-3M3 3l4 4M21 21l-4-4M14 2.5v2.5M2.5 14h2.5"/></svg>
<div class="a t" style="left:1467.7px;top:619.10px;font-size:10.2px;line-height:14px;color:#262626;font-weight:400;">Connection Anomaly</div>
<div class="a t" style="right:88px;top:616.90px;font-size:10.0px;line-height:14px;color:#262626;font-weight:400;">16</div>
<div class="a" style="left:1450px;top:645.4px;width:370.00px;height:4.50px;background:#efefef;border-radius:3px"></div>
<div class="a" style="left:1450px;top:645.4px;width:5.70px;height:4.50px;background:#c84444;border-radius:3px"></div>
<svg class="a" style="left:1449.02px;top:670.12px;" width="12.96" height="12.96" viewBox="0 0 24 24" fill="none" stroke="#262626" stroke-width="1.85" stroke-linecap="round" stroke-linejoin="round"><path d="M2.5 21.5h19M5.5 17.5l.8-4.5L15.8 3.5l3.7 3.7L10 16.7z"/></svg>
<div class="a t" style="left:1467.7px;top:670.10px;font-size:10.2px;line-height:14px;color:#262626;font-weight:400;">Port Changed</div>
<div class="a t" style="right:88px;top:667.90px;font-size:10.0px;line-height:14px;color:#262626;font-weight:400;">1</div>
<div class="a" style="left:1450px;top:696.4px;width:370.00px;height:4.50px;background:#efefef;border-radius:3px"></div>
<div class="a" style="left:242px;top:795px;width:524.30px;height:145.00px;background:#fff;border-radius:8px;box-shadow:0 0 4px rgba(0,0,0,0.07)"></div>
<div class="a" style="left:242px;top:838.7px;width:524.30px;height:1.00px;background:#efefef"></div>
<svg class="a" style="left:260.90px;top:809.30px;" width="14.40" height="14.40" viewBox="0 0 24 24" fill="none" stroke="#e0303c" stroke-width="1.83" stroke-linecap="round" stroke-linejoin="round"><path d="M12 2.5 2 21h20z"/><path d="M12 9v6M12 18v.3"/></svg>
<div class="a t" style="left:281.4px;top:808.60px;font-size:12.4px;line-height:17px;color:#262626;font-weight:700;">Risk Distribution</div>
<div class="a" style="left:262px;top:858.3px;width:484.90px;height:53.20px;background:#fcecec;border-left:2px solid #d0202e;border-radius:8px"></div>
<div class="a" style="left:273.3px;top:865.2px;width:40.40px;height:17.90px;background:#cf1322;border-radius:4px"></div>
<div class="a t" style="left:279.9px;top:868.80px;font-size:8.0px;line-height:11px;color:#fff;font-weight:700;">Critical</div>
<div class="a t" style="right:1170.1px;top:865.10px;font-size:12.5px;line-height:18px;color:#cf1322;font-weight:700;">1</div>
<div class="a" style="left:273px;top:895.9px;width:464.00px;height:5.10px;background:#e9e1e3;border-radius:3px"></div>
<div class="a" style="left:273px;top:895.9px;width:1.50px;height:5.10px;background:#cf1322;border-radius:3px"></div>
<div class="a" style="left:262px;top:924.1px;width:484.90px;height:35.90px;background:#fcf0f0;border-left:2px solid #f08a8a;border-radius:8px"></div>
<div class="a" style="left:779px;top:794px;width:1061.00px;height:146.00px;background:#fff;border-radius:8px;box-shadow:0 0 4px rgba(0,0,0,0.07)"></div>
<div class="a" style="left:779px;top:839.2px;width:1061.00px;height:1.00px;background:#efefef"></div>
<svg class="a" style="left:796.40px;top:808.60px;" width="15.60" height="15.60" viewBox="0 0 24 24" fill="none" stroke="#1a8fb0" stroke-width="2.00" stroke-linecap="round" stroke-linejoin="round"><circle cx="12" cy="12" r="10"/><path d="M12 6.2V12.3l3.3 3.3"/></svg>
<div class="a t" style="left:817.6px;top:808.20px;font-size:12.6px;line-height:18px;color:#262626;font-weight:700;">Recent Changes Timeline</div>
<div class="a t" style="left:1796.1px;top:810.2px;width:23.8px;height:15.6px;border-radius:8px;background:#1788a8;color:#fff;font-size:10.2px;font-weight:700;line-height:15.6px;text-align:center">50</div>
<div class="a" style="left:1834px;top:840.2px;width:6.00px;height:85.80px;background:#f0f0f0"></div>
<div class="a" style="left:1834.3px;top:839.5px;width:5.20px;height:76.10px;background:#7b7b7b;border-radius:3px"></div>
<div class="a" style="left:804.8px;top:858px;width:1.20px;height:68.00px;background:#5b6fe0"></div>
<div class="a" style="left:801.1px;top:858.9px;width:14.6px;height:14.6px;border-radius:50%;background:#fff;border:1.2px solid #fbe0e0"></div>
<div class="a" style="left:803.9px;top:861.7px;width:9px;height:9px;border-radius:50%;background:#e03a40"></div>
<svg class="a" style="left:805.28px;top:863.08px;" width="6.24" height="6.24" viewBox="0 0 24 24" fill="none" stroke="#fff" stroke-width="2.31" stroke-linecap="round" stroke-linejoin="round"><circle cx="12" cy="12" r="10"/><path d="M12 6.5v7M12 17v.3"/></svg>
<div class="a" style="left:834px;top:857.8px;width:980.00px;height:102.20px;background:#eef0f4;border-left:2px solid #e0303c;border-radius:8px"></div>
<div class="a" style="left:844.9px;top:868.2px;width:62.70px;height:17.20px;background:#cf1322;border-radius:4px"></div>
<div class="a t" style="left:851.4px;top:871.30px;font-size:7.8px;line-height:11px;color:#fff;font-weight:400;-webkit-text-stroke:0.2px #fff">Error Anomaly</div>
<div class="a" style="left:910.8px;top:868.2px;width:30.00px;height:17.20px;background:#e04a50;border-radius:4px"></div>
<div class="a t" style="left:917.6px;top:871.30px;font-size:8.0px;line-height:11px;color:#fff;font-weight:400;-webkit-text-stroke:0.2px #fff">High</div>
<div class="a t" style="right:103.79999999999995px;top:870.00px;font-size:8.6px;line-height:12px;color:#8c8c8c;font-weight:400;">02-23 11:22</div>
<div class="a t" style="left:844.9px;top:891.00px;font-size:10.45px;line-height:15px;color:#262626;font-weight:700;">harbor-core-65b87c749d-fpthp</div>
<svg class="a" style="left:999.8px;top:894.5px" width="8.5" height="8" viewBox="0 0 8.5 8" fill="none" stroke="#262626" stroke-width="1.5" stroke-linecap="round" stroke-linejoin="round"><path d="M1 4h6.3M4.3 1 7.3 4 4.3 7"/></svg>
<div class="a t" style="left:1011.1px;top:891.50px;font-size:10.3px;line-height:14px;color:#262626;font-weight:700;">static-mail-eu-1-253.engines.dengage.net</div>
<div class="a t" style="left:1219.4px;top:892.30px;font-size:9.5px;line-height:13px;color:#8c8c8c;font-weight:400;">(default)</div>
<div class="a t" style="left:844.9px;top:910.20px;font-size:9.3px;line-height:13px;color:#8c8c8c;font-weight:400;">New connection errors: RETRANSMIT (count: 4)</div>
</div></body></html>
